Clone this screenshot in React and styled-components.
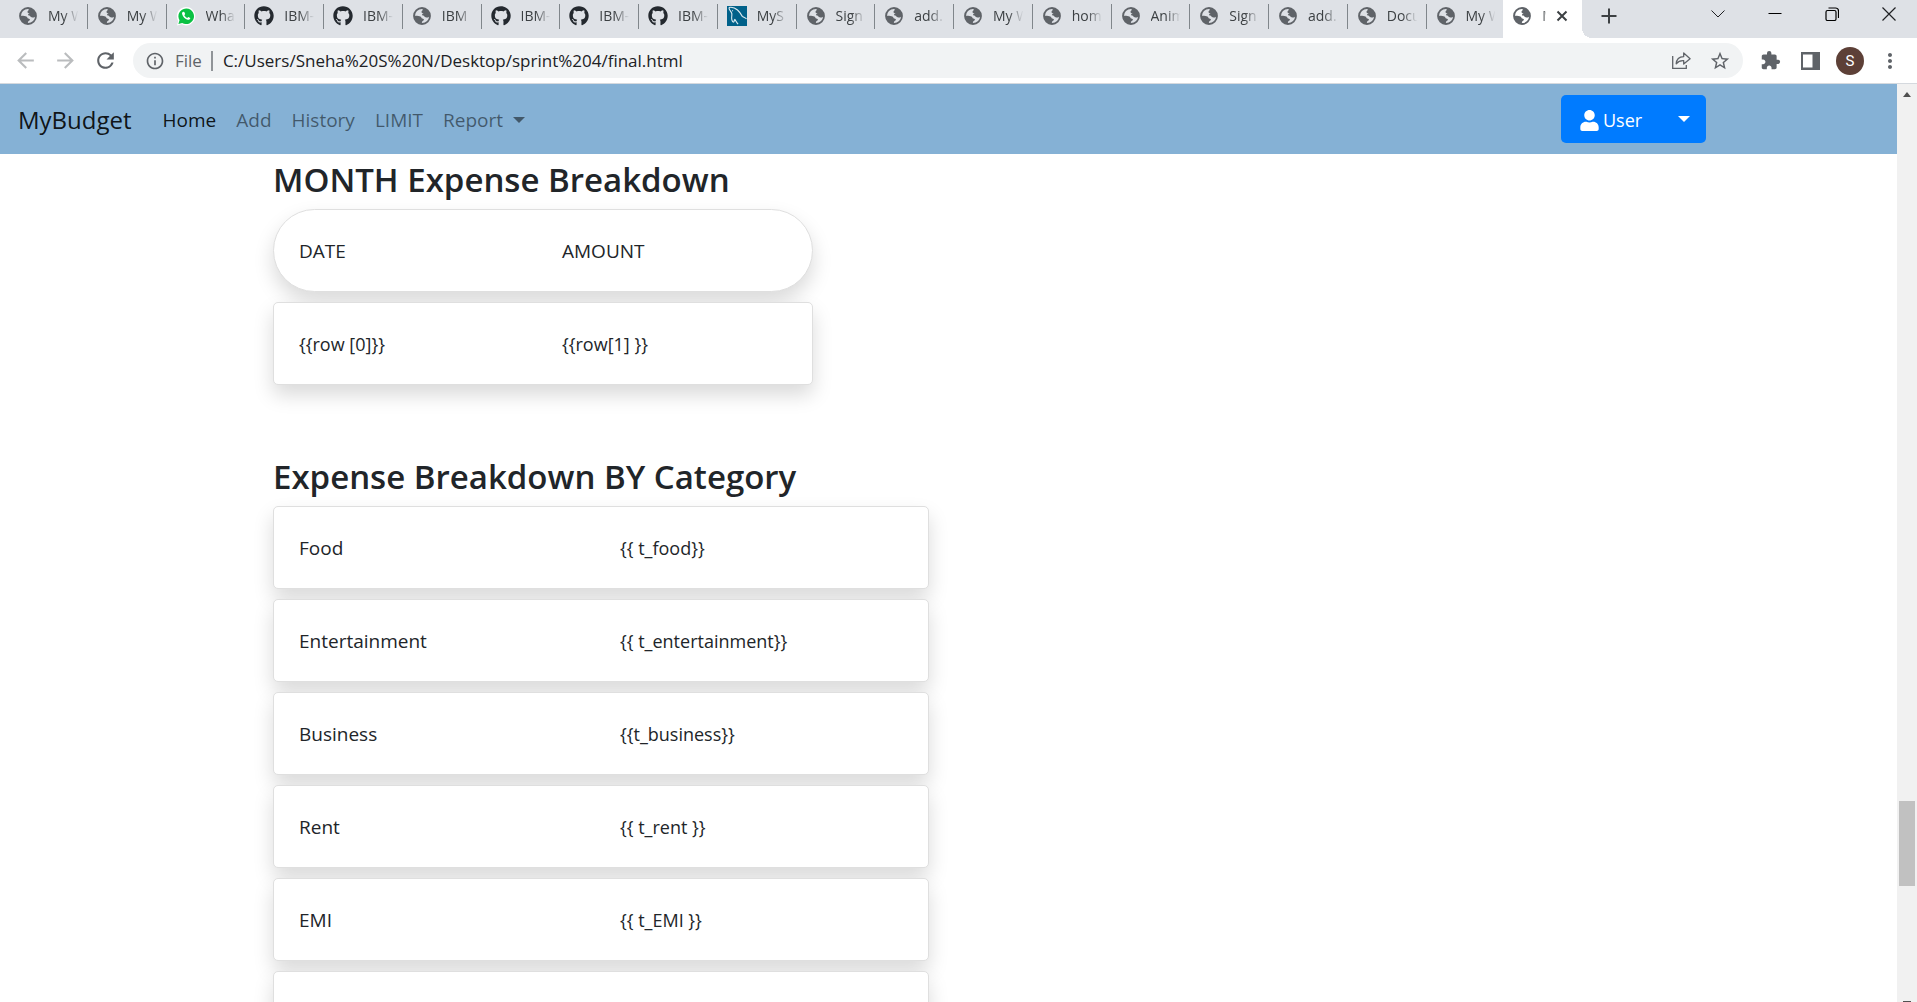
import React from "react";
import styled, { createGlobalStyle, css } from "styled-components";
import { FaGithub, FaUser } from "react-icons/fa";
import {
  MdArrowBack,
  MdArrowForward,
  MdRefresh,
  MdInfoOutline,
  MdStarOutline,
  MdExtension,
  MdMoreVert,
} from "react-icons/md";

const GlobalStyle = createGlobalStyle`
  *, *::before, *::after { box-sizing: border-box; }
  body {
    margin: 0;
    background: #fff;
    color: #212529;
    font-family: "Open Sans", "Noto Sans", sans-serif;
    font-size: 19px;
    line-height: 30px;
  }
  button, input { font: inherit; }
`;

const Window = styled.div`
  display: flex;
  flex-direction: column;
  height: 100vh;
  overflow: hidden;
`;

/* ---------- tab strip ---------- */

const TabStrip = styled.div`
  display: flex;
  flex: none;
  height: 38px;
  padding-left: 9px;
  background: #dee1e6;
`;

const TabList = styled.div`
  display: grid;
  grid-auto-flow: column;
  grid-auto-columns: minmax(0, 1fr);
  flex: 0 1 1575px;
  min-width: 0;
`;

const Tab = styled.button`
  position: relative;
  display: flex;
  min-width: 0;
  align-items: center;
  gap: 10px;
  height: 38px;
  padding: 0 9px 6px;
  border: 0;
  background: transparent;
  color: #3c4043;
  text-align: left;

  & + &::before {
    content: "";
    position: absolute;
    left: -1px;
    top: 4px;
    width: 1px;
    height: 25px;
    background: #80868b;
  }

  ${(p) =>
    p.$active &&
    css`
      margin: 0 2px 0 -2px;
      padding-right: 14px;
      background: #fff;

      &&&::before {
        left: -10px;
        top: auto;
        bottom: 0;
        width: 10px;
        height: 10px;
        background: radial-gradient(circle at 0 0, transparent 10px, #fff 10px);
      }
      &::after {
        content: "";
        position: absolute;
        right: -10px;
        bottom: 0;
        width: 10px;
        height: 10px;
        background: radial-gradient(circle at 100% 0, transparent 10px, #fff 10px);
      }
    `}
`;

const Favicon = styled.span`
  display: flex;
  flex: none;
  width: 20px;
  justify-content: center;
`;

const TabTitle = styled.span`
  flex: 1 1 0;
  min-width: 0;
  overflow: hidden;
  white-space: nowrap;
  font-size: 14px;
  line-height: 20px;
  mask-image: linear-gradient(to right, #000 50%, transparent 98%);
`;

const IconButton = styled.button`
  display: flex;
  flex: none;
  align-items: center;
  justify-content: center;
  width: ${(p) => p.$width || 40}px;
  height: ${(p) => p.$height || 32}px;
  padding: 0;
  border: 0;
  background: transparent;
  color: ${(p) => p.$color || "#5f6368"};
`;

const WindowControls = styled.div`
  display: flex;
  margin-left: auto;
  padding-bottom: 11px;
`;

/* ---------- toolbar ---------- */

const Toolbar = styled.div`
  display: flex;
  flex: none;
  align-items: center;
  height: 46px;
  padding: 0 7px 0 5px;
  border-bottom: 1px solid #d5d9de;
  background: #fff;
`;

const Omnibox = styled.div`
  display: flex;
  flex: 1 1 0;
  min-width: 0;
  align-items: center;
  height: 35px;
  margin: 0 7px 0 8px;
  padding: 0 4px 0 12px;
  border-radius: 18px;
  background: #f1f3f4;
`;

const SiteInfo = styled.button`
  display: flex;
  align-items: center;
  gap: 10px;
  height: 20px;
  padding: 0 9px 0 0;
  border: 0;
  border-right: 2px solid #909498;
  background: transparent;
  color: #5f6368;
  font-size: 17px;
`;

const AddressInput = styled.input`
  flex: 1 1 0;
  min-width: 0;
  height: 30px;
  padding: 0 0 0 10px;
  border: 0;
  outline: 0;
  background: transparent;
  color: #202124;
  font-size: 17px;
`;

const Avatar = styled.button`
  width: 28px;
  height: 28px;
  margin: 0 6px;
  padding: 0;
  border: 0;
  border-radius: 50%;
  background: #5d4037;
  color: #fff;
  font-family: Roboto, sans-serif;
  font-size: 15px;
  line-height: 28px;
`;

/* ---------- page ---------- */

const Viewport = styled.div`
  display: flex;
  flex: 1 1 0;
  min-height: 0;
`;

const Page = styled.div`
  flex: 1 1 0;
  min-width: 0;
  overflow: hidden;
`;

const Navbar = styled.nav`
  display: flex;
  align-items: center;
  height: 70px;
  padding: 0 191px 0 18px;
  background: #85b1d5;
`;

const Brand = styled.a`
  margin-right: 31px;
  padding-top: 2px;
  color: rgba(0, 0, 0, 0.9);
  font-size: 24px;
  line-height: 38px;
  text-decoration: none;
`;

const NavLinks = styled.div`
  display: flex;
  gap: 20px;
  padding-top: 2px;
`;

const NavLink = styled.a`
  display: flex;
  align-items: center;
  gap: 10px;
  color: ${(p) => (p.$active ? "rgba(0, 0, 0, 0.9)" : "rgba(0, 0, 0, 0.5)")};
  text-decoration: none;
`;

const Caret = styled.span`
  border: 6px solid transparent;
  border-top-color: currentColor;
  border-bottom: 0;
`;

const ButtonGroup = styled.div`
  display: flex;
  height: 48px;
  margin-left: auto;
  overflow: hidden;
  border-radius: 5px;
`;

const PrimaryButton = styled.button`
  display: flex;
  align-items: center;
  justify-content: ${(p) => (p.$toggle ? "center" : "flex-start")};
  gap: 3px;
  width: ${(p) => (p.$toggle ? 45 : 100)}px;
  padding: ${(p) => (p.$toggle ? "0" : "2px 0 0 18px")};
  border: 0;
  background: #007bff;
  color: #fff;
  font-size: 18px;
`;

const Container = styled.main`
  max-width: 1425px;
  margin: 0 auto;
  padding: 4px 37px 0;
`;

const Section = styled.section`
  width: ${(p) => p.$width}px;
  max-width: 100%;
  margin-bottom: 70px;
`;

const Heading = styled.h2`
  margin: 0 0 8px;
  padding-top: 1px;
  font-size: 33px;
  font-weight: 600;
  line-height: 42px;
  white-space: nowrap;
`;

const CardList = styled.div`
  display: grid;
  gap: 10px;
`;

const Card = styled.div`
  display: grid;
  grid-template-columns: 1fr 1fr;
  column-gap: 38px;
  min-height: 83px;
  padding: 26px 25px 25px;
  border: 1px solid #dfdfdf;
  border-radius: ${(p) => (p.$pill ? 42 : 5)}px;
  background: #fff;
  box-shadow: 0 10px 20px rgba(0, 0, 0, 0.15);
`;

const Value = styled.span`
  font-size: 18px;
`;

const Scrollbar = styled.div`
  display: grid;
  flex: none;
  grid-template-rows: 20px 698fr 85px 114fr 2px;
  justify-items: center;
  width: 20px;
  background: #f1f1f1;
`;

const ScrollArrow = styled.span`
  align-self: center;
  border: 4px solid transparent;
  border-bottom: 5px solid #505050;
  border-top: 0;
`;

const ScrollThumb = styled.span`
  grid-row: 3;
  width: 16px;
  background: #c1c1c1;
`;

const ScrollDown = styled.span`
  grid-row: 5;
  align-self: end;
  width: 8px;
  height: 1px;
  background: #505050;
`;

/* ---------- drawings ---------- */

const GlobeIcon = () => (
  <svg width="18" height="18" viewBox="0 0 18 18" fill="#5f6368">
    <circle cx="9" cy="9" r="8" fill="none" stroke="#5f6368" strokeWidth="1.8" />
    <path d="M9.2 1.2c4 0 7.6 3.4 7.6 7.8-.6 1-1.8 1.6-3.2 1.5-1.5-.1-2.4-.9-2.9-1.9-.8.3-1.7-.1-1.6-1.1.1-.8.9-1.1 1.7-1.3-1-.1-2.2-.2-2.3-1.3-.1-1 1.2-1.3 1.3-2.1z" />
    <path d="M1.3 8.7c2.3-.2 5 .2 6.1.7 1 .5.9 1.7 1.9 2 .9.3 1.7.4 1.6 1.4-.1.9-1.3 1-1.7 1.8-.3.7-.2 1.4-.6 2.1-4.2-.2-7.3-3.6-7.3-8z" />
  </svg>
);

const WhatsAppIcon = () => (
  <svg width="20" height="20" viewBox="0 0 20 20">
    <path d="M1 19.5 2.2 15A9.2 9.2 0 1 1 5.7 18.3Z" fill="#fff" />
    <path d="M2.4 18 3.5 14.3A7.8 7.8 0 1 1 6.2 17Z" fill="#0ac143" />
    <path
      d="M7.3 5.7c-.8.2-1.5 1.1-1.2 2.4.7 2.8 3 5 5.6 5.7 1.3.3 2.6-.5 2.6-1.8l-2-1.1-1.1 1.1c-1.2-.4-2.4-1.6-2.9-2.7l.9-1.2-.9-2.2z"
      fill="#fff"
    />
  </svg>
);

const MySqlIcon = () => (
  <svg width="20" height="20" viewBox="0 0 20 20" fill="none">
    <rect width="20" height="20" fill="#00618a" />
    <path
      d="M2 1.5c3-.6 6 .3 8.5 2.5 2.3 2 3.5 4.4 4.8 6.4 1 .9 3.2 1 4.2 2.6M2 1.5c-.2 2.5 2.3 4 2.8 6 .4 2.2-.8 4.5.3 7 .5 1.2 1.2 2 1.8 1.3.5-.7.2-2 .9-2.3.8.8 1.7 3.2 3.3 4.7M5.2 4.6l.8.4"
      stroke="#dcebf2"
      strokeWidth="1.1"
    />
  </svg>
);

const ShareIcon = () => (
  <svg width="21" height="19" viewBox="0 0 21 19" fill="none" stroke="#5f6368" strokeWidth="1.3">
    <path d="M1.7 5v12.3h13.6V14" />
    <path d="M5.2 12.8c.3-4.5 3-7 7.5-7.2V2l6.4 5.7-6.4 5.3V9.7c-3.4-.2-5.7.9-7.5 3.1z" strokeLinejoin="round" />
  </svg>
);

const PanelIcon = () => (
  <svg width="19" height="18" viewBox="0 0 19 18" fill="#5f6368">
    <path fillRule="evenodd" d="M0 0h19v18H0zM2 2.5v13h9.5v-13z" />
  </svg>
);

const LineIcon = ({ d, size = 14, width = 1.2 }) => (
  <svg width={size} height={size} viewBox={`0 0 ${size} ${size}`} fill="none" stroke="currentColor" strokeWidth={width}>
    <path d={d} />
  </svg>
);

const favicons = {
  globe: <GlobeIcon />,
  whatsapp: <WhatsAppIcon />,
  github: <FaGithub size={20} color="#24292f" />,
  mysql: <MySqlIcon />,
};

const tabs = [
  ["globe", "My W"],
  ["globe", "My W"],
  ["whatsapp", "Wha"],
  ["github", "IBM-"],
  ["github", "IBM-"],
  ["globe", "IBM"],
  ["github", "IBM-"],
  ["github", "IBM-"],
  ["github", "IBM-"],
  ["mysql", "MyS"],
  ["globe", "Sign"],
  ["globe", "add."],
  ["globe", "My W"],
  ["globe", "hom"],
  ["globe", "Anim"],
  ["globe", "Sign"],
  ["globe", "add."],
  ["globe", "Docu"],
  ["globe", "My W"],
];

const months = [["{{row [0]}}", "{{row[1] }}"]];

const categories = [
  ["Food", "{{ t_food}}"],
  ["Entertainment", "{{ t_entertainment}}"],
  ["Business", "{{t_business}}"],
  ["Rent", "{{ t_rent }}"],
  ["EMI", "{{ t_EMI }}"],
  ["", ""],
];

export default function App() {
  return (
    <Window>
      <GlobalStyle />
      <TabStrip>
        <TabList>
          {tabs.map(([icon, title], i) => (
            <Tab key={i}>
              <Favicon>{favicons[icon]}</Favicon>
              <TabTitle>{title}</TabTitle>
            </Tab>
          ))}
          <Tab $active>
            <Favicon>{favicons.globe}</Favicon>
            <TabTitle>M</TabTitle>
            <LineIcon size={12} width={2} d="M1.5 1.5l9 9m0-9l-9 9" />
          </Tab>
        </TabList>
        <IconButton aria-label="New tab" $width={50} $color="#3c4043">
          <LineIcon size={16} width={2} d="M8 .5v15M.5 8h15" />
        </IconButton>
        <WindowControls>
          <IconButton aria-label="Search tabs" $width={57} $height={27} $color="#202124">
            <LineIcon width={1} d="M.5 3.500 7 10l6.500-6.500" />
          </IconButton>
          <IconButton aria-label="Minimize" $width={57} $height={27} $color="#000">
            <LineIcon width={1} d="M.5 6.500h13" />
          </IconButton>
          <IconButton aria-label="Restore" $width={57} $height={27} $color="#000">
            <LineIcon d="M2.5 3.500h7a1.500 1.500 0 0 1 1.500 1.500v7a1.500 1.500 0 0 1-1.500 1.500h-7A1.500 1.500 0 0 1 1 12V5a1.500 1.500 0 0 1 1.500-1.500zM3.500 1h7a3 3 0 0 1 3 3v7" />
          </IconButton>
          <IconButton aria-label="Close" $width={57} $height={27} $color="#202124">
            <LineIcon d="M.5.5l13 13m0-13l-13 13" />
          </IconButton>
        </WindowControls>
      </TabStrip>

      <Toolbar>
        <IconButton aria-label="Back" $color="#babcbe"><MdArrowBack size={25} /></IconButton>
        <IconButton aria-label="Forward" $color="#babcbe"><MdArrowForward size={25} /></IconButton>
        <IconButton aria-label="Reload"><MdRefresh size={25} /></IconButton>
        <Omnibox>
          <SiteInfo>
            <MdInfoOutline size={20} />
            File
          </SiteInfo>
          <AddressInput
            aria-label="Address"
            defaultValue="C:/Users/Sneha%20S%20N/Desktop/sprint%204/final.html"
          />
          <IconButton aria-label="Share"><ShareIcon /></IconButton>
          <IconButton aria-label="Bookmark" $width={38}><MdStarOutline size={22} /></IconButton>
        </Omnibox>
        <IconButton aria-label="Extensions"><MdExtension size={21} /></IconButton>
        <IconButton aria-label="Side panel"><PanelIcon /></IconButton>
        <Avatar aria-label="Profile">S</Avatar>
        <IconButton aria-label="Menu"><MdMoreVert size={24} /></IconButton>
      </Toolbar>

      <Viewport>
        <Page>
          <Navbar>
            <Brand href="#">MyBudget</Brand>
            <NavLinks>
              <NavLink href="#" $active>Home</NavLink>
              <NavLink href="#">Add</NavLink>
              <NavLink href="#">History</NavLink>
              <NavLink href="#">LIMIT</NavLink>
              <NavLink href="#">Report<Caret /></NavLink>
            </NavLinks>
            <ButtonGroup>
              <PrimaryButton>
                <FaUser size={21} />
                User
              </PrimaryButton>
              <PrimaryButton $toggle aria-label="User menu"><Caret /></PrimaryButton>
            </ButtonGroup>
          </Navbar>

          <Container>
            <Section $width={540}>
              <Heading>MONTH Expense Breakdown</Heading>
              <CardList>
                <Card $pill>
                  <span>DATE</span>
                  <span>AMOUNT</span>
                </Card>
                {months.map(([date, amount]) => (
                  <Card key={date}>
                    <Value>{date}</Value>
                    <Value>{amount}</Value>
                  </Card>
                ))}
              </CardList>
            </Section>
            <Section $width={656}>
              <Heading>Expense Breakdown BY Category</Heading>
              <CardList>
                {categories.map(([name, total]) => (
                  <Card key={name}>
                    <span>{name}</span>
                    <Value>{total}</Value>
                  </Card>
                ))}
              </CardList>
            </Section>
          </Container>
        </Page>
        <Scrollbar>
          <ScrollArrow />
          <ScrollThumb />
          <ScrollDown />
        </Scrollbar>
      </Viewport>
    </Window>
  );
}
